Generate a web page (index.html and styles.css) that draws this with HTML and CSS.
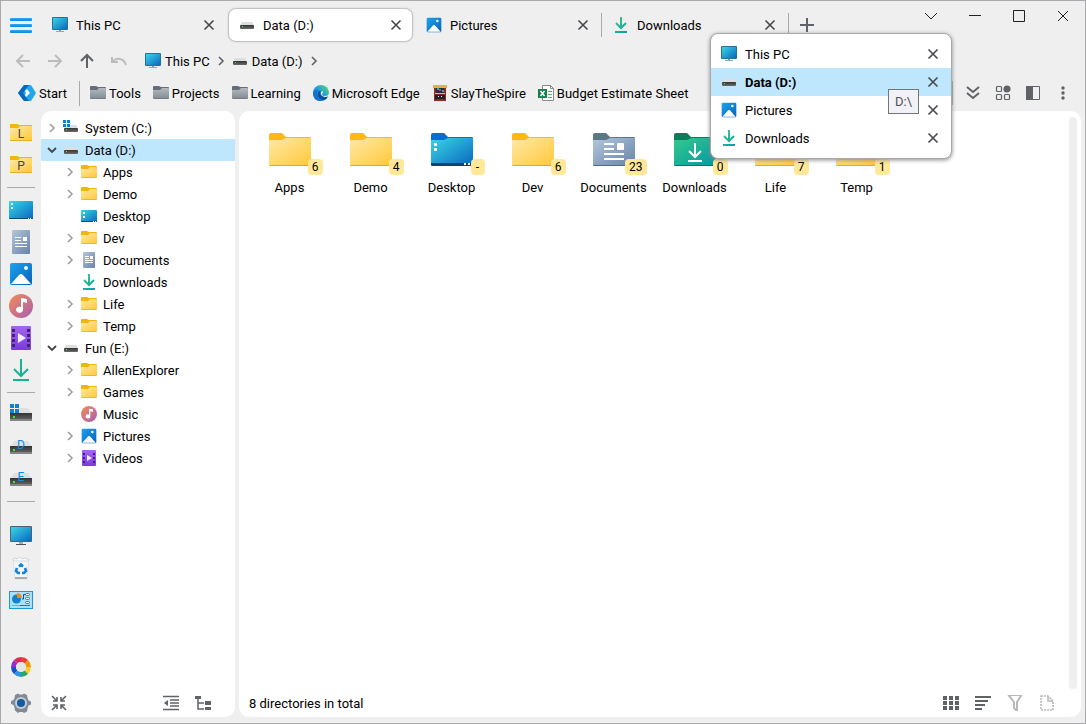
FILE: index.html
```html
<!DOCTYPE html>
<html lang="en">

<head>
    <meta charset="UTF-8">
    <meta name="viewport" content="width=device-width, initial-scale=1">
    <link rel="stylesheet" href="styles.css">
    <title>Data (D:)</title>
</head>

<body>
    <!-- icon sprite -->
    <svg class="sprite" aria-hidden="true">
        <defs>
            <linearGradient id="g-yellow" x1="0" y1="0" x2="1" y2="1"><stop offset="0" stop-color="#ffe9a6"/><stop offset="1" stop-color="#ffc83a"/></linearGradient>
            <linearGradient id="g-gray" x1="0" y1="0" x2="0" y2="1"><stop offset="0" stop-color="#b3bac1"/><stop offset="1" stop-color="#858e97"/></linearGradient>
            <linearGradient id="g-screen" x1="0" y1="0" x2="1" y2="1"><stop offset="0" stop-color="#3ad6e4"/><stop offset="1" stop-color="#0a68c0"/></linearGradient>
            <linearGradient id="g-blue" x1="0" y1="0" x2="1" y2="1"><stop offset="0" stop-color="#1ba4ee"/><stop offset="1" stop-color="#0861b8"/></linearGradient>
            <linearGradient id="g-doc" x1="0" y1="0" x2="1" y2="1"><stop offset="0" stop-color="#b4c6dc"/><stop offset="1" stop-color="#6683a8"/></linearGradient>
            <linearGradient id="g-green" x1="0" y1="0" x2="1" y2="1"><stop offset="0" stop-color="#35c98a"/><stop offset="1" stop-color="#0498a5"/></linearGradient>
            <linearGradient id="g-down" gradientUnits="userSpaceOnUse" x1="2" y1="1" x2="14" y2="15"><stop offset="0" stop-color="#3dcb85"/><stop offset="1" stop-color="#08a0a8"/></linearGradient>
            <linearGradient id="g-music" x1="0" y1="0" x2="1" y2="1"><stop offset="0" stop-color="#f38c57"/><stop offset="1" stop-color="#a65fb0"/></linearGradient>
            <linearGradient id="g-video" x1="0" y1="0" x2="0" y2="1"><stop offset="0" stop-color="#a466ef"/><stop offset="1" stop-color="#7a3bdc"/></linearGradient>
            <linearGradient id="g-drive" x1="0" y1="0" x2="0" y2="1"><stop offset="0" stop-color="#333"/><stop offset="1" stop-color="#6c6c6c"/></linearGradient>
            <linearGradient id="g-menu" x1="0" y1="0" x2="0" y2="1"><stop offset="0" stop-color="#2aa9f4"/><stop offset="1" stop-color="#1485dc"/></linearGradient>
            <linearGradient id="g-edge" x1="0" y1="1" x2="1" y2="0"><stop offset="0" stop-color="#0c59a4"/><stop offset=".5" stop-color="#1c9de0"/><stop offset="1" stop-color="#5fdc62"/></linearGradient>
        </defs>
        <symbol id="pc" viewBox="0 0 16 16">
            <path d="M7 13h2v1H7z" fill="#8b98a5"/><path d="M4 14h8v1H4z" fill="#9aa5b0"/>
            <rect width="16" height="13" rx="1" fill="#23729b"/><rect x="1" y="1" width="14" height="11" fill="url(#g-screen)"/>
        </symbol>
        <symbol id="drive" viewBox="0 0 16 16">
            <path d="M3 5h10l2 3H1z" fill="#dedede"/><rect x="1" y="8" width="14" height="4" rx="1" fill="url(#g-drive)"/><rect x="3" y="9" width="1" height="1" fill="#3f3"/>
        </symbol>
        <symbol id="drive-c" viewBox="0 0 16 16">
            <path d="M5 5h8l2 3H1z" fill="#dedede"/><rect x="1" y="8" width="14" height="4" rx="1" fill="url(#g-drive)"/><rect x="3" y="9" width="1" height="1" fill="#3f3"/>
            <path d="M0 0h3v3H0zM4 0h3v3H4zM0 4h3v3H0zM4 4h3v3H4z" fill="#0b84d8"/>
        </symbol>
        <symbol id="folder" viewBox="0 0 16 16">
            <path d="M0 2a1 1 0 0 1 1-1h5l2 1h7a1 1 0 0 1 1 1v4H0z" fill="#f4b30d"/><path d="M0 5h7l2-2h6a1 1 0 0 1 1 1v9H0z" fill="url(#g-yellow)"/><path d="M0 13h16a1 1 0 0 1-1 1H1a1 1 0 0 1-1-1z" fill="#edb62c"/>
        </symbol>
        <symbol id="folder-gray" viewBox="0 0 16 16">
            <path d="M0 2a1 1 0 0 1 1-1h5l2 1h7a1 1 0 0 1 1 1v4H0z" fill="#666d74"/><path d="M0 5h7l2-2h6a1 1 0 0 1 1 1v9H0z" fill="url(#g-gray)"/><path d="M0 13h16a1 1 0 0 1-1 1H1a1 1 0 0 1-1-1z" fill="#757d85"/>
        </symbol>
        <symbol id="desktop" viewBox="0 0 24 24">
            <rect y="3" width="24" height="18" rx="1" fill="url(#g-screen)"/><path d="M0 20h24a1 1 0 0 1-1 1H1a1 1 0 0 1-1-1z" fill="#0a4f83"/>
            <path d="M2 5h2v2H2zM2 9h2v2H2zM19 20h1v1h-1zM21 20h1v1h-1z" fill="#fff"/>
        </symbol>
        <symbol id="desktop-sm" viewBox="0 0 16 16">
            <rect y="2" width="16" height="12" rx="1" fill="url(#g-screen)"/><path d="M0 13h16a1 1 0 0 1-1 1H1a1 1 0 0 1-1-1z" fill="#0a4f83"/>
            <path d="M2 4h2v2H2zM2 8h2v2H2zM12 13h1v1h-1zM14 13h1v1h-1z" fill="#fff"/>
        </symbol>
        <symbol id="document" viewBox="0 0 24 24">
            <rect x="3" width="18" height="24" rx="1" fill="url(#g-doc)"/>
            <path d="M6 7h6v1H6zM6 10h6v1H6zM6 13h12v1H6zM6 16h12v1H6zM14 7h4v4h-4z" fill="#fff"/>
        </symbol>
        <symbol id="document-sm" viewBox="0 0 16 16">
            <rect x="2" width="12" height="16" rx="1" fill="url(#g-doc)"/>
            <path d="M4 4h4v1H4zM4 6h4v1H4zM4 8h8v1H4zM4 10h8v1H4zM9 4h3v3H9z" fill="#fff"/>
        </symbol>
        <symbol id="picture" viewBox="0 0 24 24">
            <rect x="1" y="1" width="22" height="22" rx="2" fill="url(#g-blue)"/><path d="M2 22l8-9q2-2 4 0l8 9z" fill="#fff"/><circle cx="17" cy="6" r="2" fill="#e2f6ff"/>
        </symbol>
        <symbol id="music" viewBox="0 0 24 24">
            <circle cx="12" cy="12" r="12" fill="url(#g-music)"/><path d="M12 4l6 1v4l-4-1v8a3.500 3 0 1 1-2-3z" fill="#fff"/>
        </symbol>
        <symbol id="video" viewBox="0 0 24 24">
            <rect x="2" width="20" height="24" rx="1" fill="url(#g-video)"/>
            <path d="M3 3h3v3H3zM3 8h3v3H3zM3 13h3v3H3zM3 18h3v3H3zM18 3h3v3h-3zM18 8h3v3h-3zM18 13h3v3h-3zM18 18h3v3h-3z" fill="#42217c"/><path d="M9 7l8 5-8 5z" fill="#f3edff"/>
        </symbol>
        <symbol id="video-sm" viewBox="0 0 16 16">
            <rect x="1" width="14" height="16" rx="1" fill="url(#g-video)"/>
            <path d="M2 3h2v2H2zM2 7h2v2H2zM2 11h2v2H2zM12 3h2v2h-2zM12 7h2v2h-2zM12 11h2v2h-2z" fill="#42217c"/><path d="M6 5l5 3-5 3z" fill="#f3edff"/>
        </symbol>
        <symbol id="download" viewBox="0 0 16 16">
            <path d="M8 0v11M3 6l5 5 5-5M2 15h12" fill="none" stroke="url(#g-down)" stroke-width="2"/>
        </symbol>
        <symbol id="download-lg" viewBox="0 0 24 24">
            <path d="M12 1v17M5 11l7 7 7-7M4 22h16" fill="none" stroke="#18b391" stroke-width="2"/>
        </symbol>
        <symbol id="side-folder" viewBox="0 0 24 24">
            <path d="M1 4a1 1 0 0 1 1-1h6l2 1h13v5H1z" fill="#f4b30d"/><path d="M1 7h8l2-2h12v15H1z" fill="url(#g-yellow)"/><path d="M1 19h22v1H1z" fill="#e8b02b"/>
        </symbol>
        <symbol id="side-drive" viewBox="0 0 24 24">
            <path d="M5 6h14l4 6H1z" fill="#dfdfe1"/><path d="M1 11h22v8H1z" fill="url(#g-drive)"/><path d="M1 17h22v2H1z" fill="#858585"/><path d="M4 14h2v2H4z" fill="#2df02d"/>
        </symbol>
        <symbol id="side-pc" viewBox="0 0 24 24">
            <path d="M10 18h4v2h-4z" fill="#a4adb3"/><path d="M7 20h10v1H7z" fill="#4a5359"/><rect x="1" y="2" width="22" height="16" rx="1" fill="#4c626f"/><rect x="2" y="3" width="20" height="14" fill="url(#g-screen)"/>
        </symbol>
        <symbol id="bin" viewBox="0 0 24 24">
            <path d="M4 3h16l-2 20H6z" fill="#f3f5f7" stroke="#d3d7db" stroke-width=".6"/><path d="M4 4l1-2 3 1 3-2 2 2 3-1 4 2-1 1H5z" fill="#fafafa" stroke="#c0c4c8" stroke-width=".6"/><path d="M6 21h12v2H6z" fill="#a9adb1"/>
            <path d="M10 10.500l2-2 2 2M16 12l1 3-2 2h-2M11 17H9l-2-2 1-3" fill="none" stroke="#1683d8" stroke-width="2.600"/>
        </symbol>
        <symbol id="panel-chart" viewBox="0 0 24 24">
            <rect x=".5" y="3.500" width="23" height="17" fill="#a7e1fa" stroke="#1c96dc"/><circle cx="7.500" cy="11" r="4.500" fill="#1680d0"/><path d="M8 10V5a5 5 0 0 1 5 5z" fill="#f58a13"/>
            <path d="M13 11h1.500V6.500H17" fill="none" stroke="#174f85"/><g fill="#fff" stroke="#1763a8" stroke-width=".8"><rect x="16.500" y="5.500" width="4" height="2" rx="1"/><rect x="16.500" y="9.500" width="4" height="2" rx="1"/><rect x="16.500" y="13.500" width="4" height="2" rx="1"/></g>
            <path d="M3 17h8v1H3z" fill="#ef941d"/><path d="M11 17h10v1H11z" fill="#1673c6"/>
        </symbol>
        <symbol id="wheel" viewBox="0 0 24 24">
            <g fill="none" stroke-width="5">
                <path d="M12 4.500A7.500 7.500 0 0 1 17.300 6.700" stroke="#ed3b3b"/><path d="M17.300 6.700A7.500 7.500 0 0 1 19.500 12" stroke="#f5950c"/><path d="M19.500 12A7.500 7.500 0 0 1 17.300 17.300" stroke="#fccc28"/><path d="M17.300 17.300A7.500 7.500 0 0 1 12 19.500" stroke="#28a761"/>
                <path d="M12 19.500A7.500 7.500 0 0 1 6.700 17.300" stroke="#2794e5"/><path d="M6.700 17.300A7.500 7.500 0 0 1 4.500 12" stroke="#1255c0"/><path d="M4.500 12A7.500 7.500 0 0 1 6.700 6.700" stroke="#9b2bcb"/><path d="M6.700 6.700A7.500 7.500 0 0 1 12 4.500" stroke="#d92b58"/>
            </g>
            <circle cx="12" cy="12" r="5" fill="#e5e5e5"/>
        </symbol>
        <symbol id="gear" viewBox="0 0 24 24">
            <path d="M9 2.500l1.500 1h3l1.500-1 3 1.500.5 3 1 2.500 2.500 1v3l-2.500 1-1 3-.5 3-3 1.500-1.500-1h-3l-1.500 1L6 19.500l-.5-3-1-2.500L2 13v-3l2.500-1 1-2L6 4z" fill="#808b95"/><circle cx="12" cy="12" r="6" fill="#c5ccd2"/><circle cx="12" cy="12" r="4" fill="#155b9d"/>
        </symbol>
        <symbol id="close" viewBox="0 0 16 16"><path d="M3.500 3.500l9 9M12.500 3.500l-9 9" fill="none" stroke="currentColor" stroke-width="1.600"/></symbol>
        <symbol id="chevron" viewBox="0 0 16 16"><path d="M6 4l4 4-4 4" fill="none" stroke="currentColor" stroke-width="1.600"/></symbol>
        <symbol id="chevron-down" viewBox="0 0 16 16"><path d="M4 6l4 4 4-4" fill="none" stroke="currentColor" stroke-width="1.800"/></symbol>
        <symbol id="big-folder" viewBox="0 0 42 34">
            <path d="M0 2a2 2 0 0 1 2-2h11l4 4h24a1 1 0 0 1 1 1v8H0z" fill="#fcb913"/><path d="M0 7h13l4-2h25v27a1 1 0 0 1-1 1H1a1 1 0 0 1-1-1z" fill="url(#g-yellow)"/><path d="M0 32h42l-1 1H1z" fill="#e5a520"/>
        </symbol>
    </svg>

    <div class="window">
        <header class="titlebar">
            <button class="menu-btn" aria-label="Menu">
                <svg width="22" height="16" viewBox="0 0 22 16" fill="url(#g-menu)"><rect width="22" height="3" rx="1"/><rect y="6" width="22" height="3" rx="1"/><rect y="12" width="22" height="3" rx="1"/></svg>
            </button>
            <div class="tabs">
                <div class="tab"><svg class="icon"><use href="#pc"/></svg><a href="#">This PC</a><button class="close" aria-label="Close This PC"><svg class="icon"><use href="#close"/></svg></button></div>
                <div class="tab active"><svg class="icon"><use href="#drive"/></svg><a href="#">Data (D:)</a><button class="close" aria-label="Close Data"><svg class="icon"><use href="#close"/></svg></button></div>
                <div class="tab"><svg class="icon"><use href="#picture"/></svg><a href="#">Pictures</a><button class="close" aria-label="Close Pictures"><svg class="icon"><use href="#close"/></svg></button></div>
                <div class="tab divided"><svg class="icon"><use href="#download"/></svg><a href="#">Downloads</a><button class="close" aria-label="Close Downloads"><svg class="icon"><use href="#close"/></svg></button></div>
                <button class="new-tab" aria-label="New tab"><svg class="icon" viewBox="0 0 16 16"><path d="M8 1v14M1 8h14" stroke="#5f6266" stroke-width="2"/></svg></button>
            </div>
            <div class="win-controls">
                <div class="tab-list">
                    <button aria-label="Tab list"><svg class="icon" viewBox="0 0 16 16"><path d="M2 5l6 6 6-6"/></svg></button>
                    <ul class="popup">
                        <li><svg class="icon"><use href="#pc"/></svg><a href="#">This PC</a><button class="close" aria-label="Close This PC"><svg class="icon"><use href="#close"/></svg></button></li>
                        <li class="current"><svg class="icon"><use href="#drive"/></svg><a href="#">Data (D:)</a><button class="close" aria-label="Close Data"><svg class="icon"><use href="#close"/></svg></button><span class="tooltip" role="tooltip">D:\</span></li>
                        <li><svg class="icon"><use href="#picture"/></svg><a href="#">Pictures</a><button class="close" aria-label="Close Pictures"><svg class="icon"><use href="#close"/></svg></button></li>
                        <li><svg class="icon"><use href="#download"/></svg><a href="#">Downloads</a><button class="close" aria-label="Close Downloads"><svg class="icon"><use href="#close"/></svg></button></li>
                    </ul>
                </div>
                <button aria-label="Minimize"><svg class="icon" viewBox="0 0 16 16"><path d="M2 7.500h12"/></svg></button>
                <button aria-label="Maximize"><svg class="icon" viewBox="0 0 16 16"><path d="M2.500 2.500h11v11h-11z"/></svg></button>
                <button aria-label="Close"><svg class="icon" viewBox="0 0 16 16"><path d="M3 3l10 10M13 3L3 13"/></svg></button>
            </div>
        </header>

        <nav class="navbar">
            <button class="nav-btn" aria-label="Back" disabled><svg class="icon" viewBox="0 0 16 16"><path d="M15 8H2M8 2L2 8l6 6"/></svg></button>
            <button class="nav-btn" aria-label="Forward" disabled><svg class="icon" viewBox="0 0 16 16"><path d="M1 8h13M8 2l6 6-6 6"/></svg></button>
            <button class="nav-btn" aria-label="Up"><svg class="icon" viewBox="0 0 16 16"><path d="M8 15V2M2 8l6-6 6 6"/></svg></button>
            <button class="nav-btn" aria-label="Undo" disabled><svg class="icon" viewBox="0 0 16 16"><path d="M1 4v5h6M1.500 8.500c4-4 11-4 13.500 3.500"/></svg></button>
            <div class="crumbs">
                <a href="#"><svg class="icon"><use href="#pc"/></svg>This PC</a>
                <svg class="icon sep"><use href="#chevron"/></svg>
                <a href="#"><svg class="icon"><use href="#drive"/></svg>Data (D:)</a>
                <svg class="icon sep"><use href="#chevron"/></svg>
            </div>
        </nav>

        <div class="bookmarks">
            <a class="start" href="#"><svg width="18" height="18" viewBox="0 0 18 18"><path d="M6 1h7l5 8-5 8H6L0 9z" fill="#22a7ec"/><path d="M6 1h5L7 6 5 9l2 3 4 5H6L0 9z" fill="#0d65bd"/><path d="M9 5l3 4-4 4-1-2 1-2-1-2z" fill="#fff"/></svg>Start</a>
            <div class="links">
                <a href="#"><svg class="icon"><use href="#folder-gray"/></svg>Tools</a>
                <a href="#"><svg class="icon"><use href="#folder-gray"/></svg>Projects</a>
                <a href="#"><svg class="icon"><use href="#folder-gray"/></svg>Learning</a>
                <a href="#"><svg class="icon" viewBox="0 0 16 16"><circle cx="8" cy="8" r="8" fill="url(#g-edge)"/><path d="M0 8q2-4 6-3-2 1-2 4 1 5 6 7Q0 17 0 8z" fill="#1672cf"/><path d="M6 6q-2 2-1 5 2 4 6 4 3-1 4-4-3 2-6 0Q6 9 8 6z" fill="#0c4f9e"/><path d="M9 6q2 1 0 3 0 2 3 2 3 0 4-2v2q-2 1-4 1Q7 11 8 7z" fill="#efefef"/></svg>Microsoft Edge</a>
                <a href="#"><svg class="icon" viewBox="0 0 16 16"><path d="M2 0h12v16H2z" fill="#8d2829"/><path d="M1 0h14v3H1z" fill="#f2ad38"/><path d="M4 3h8v5H4z" fill="#243142"/><path d="M5 3h2v2H5zM10 5h2v2h-2z" fill="#31a5a0"/><path d="M7 4h2v2H7z" fill="#dc3974"/><path d="M3 8h10v1H3z" fill="#ecb549"/><path d="M3 10h10v4H3z" fill="#241f25"/><path d="M6 11h1v1H6zM9 11h1v1H9z" fill="#eee"/></svg>SlayTheSpire</a>
                <a href="#"><svg class="icon" viewBox="0 0 16 16"><path d="M4.500.5h8l3 3v12h-11z" fill="#fff" stroke="#888"/><path d="M12.500.5v3h3" fill="none" stroke="#888"/><path d="M10 6.500h4M10 9.500h4M10 12.500h4" stroke="#5fa583"/><path d="M0 4h9v9H0z" fill="#14824a"/><path d="M2.500 6l4 5M6.500 6l-4 5" stroke="#fff" stroke-width="1.500"/></svg>Budget Estimate Sheet</a>
            </div>
            <div class="tools">
                <button aria-label="More bookmarks"><svg class="icon" viewBox="0 0 16 16"><path d="M2 2l6 5 6-5M2 8l6 5 6-5" fill="none" stroke="#5f6266" stroke-width="2"/></svg></button>
                <button aria-label="Apps"><svg class="icon" viewBox="0 0 16 16" fill="none" stroke="#5f6266" stroke-width="1.200"><rect x="1.500" y="1.500" width="5" height="5" rx="1"/><circle cx="12" cy="4" r="3" fill="#5f6266"/><rect x="1.500" y="9.500" width="5" height="5" rx="1"/><rect x="9.500" y="9.500" width="5" height="5" rx="1"/></svg></button>
                <button aria-label="Side panel"><svg class="icon" viewBox="0 0 16 16"><path d="M1.500 1.500h13v13h-13z" fill="none" stroke="#5f6266"/><path d="M1 1h7v14H1z" fill="#5f6266"/></svg></button>
                <button aria-label="More"><svg class="icon" viewBox="0 0 16 16" fill="#5f6266"><circle cx="8" cy="3" r="1.700"/><circle cx="8" cy="8" r="1.700"/><circle cx="8" cy="13" r="1.700"/></svg></button>
            </div>
        </div>

        <main class="body">
            <aside class="rail">
                <button aria-label="Life"><svg><use href="#side-folder"/></svg><span class="letter dark">L</span></button>
                <button aria-label="Projects"><svg><use href="#side-folder"/></svg><span class="letter dark">P</span></button>
                <hr>
                <button aria-label="Desktop"><svg><use href="#desktop"/></svg></button>
                <button aria-label="Documents"><svg><use href="#document"/></svg></button>
                <button aria-label="Pictures"><svg><use href="#picture"/></svg></button>
                <button aria-label="Music"><svg><use href="#music"/></svg></button>
                <button aria-label="Videos"><svg><use href="#video"/></svg></button>
                <button aria-label="Downloads"><svg><use href="#download-lg"/></svg></button>
                <hr>
                <button aria-label="System drive"><svg viewBox="0 0 24 24"><path d="M9 5h10l4 6H1z" fill="#dfdfe1"/><path d="M1 10h22v8H1z" fill="url(#g-drive)"/><path d="M1 16h22v2H1z" fill="#858585"/><path d="M4 13h2v2H4z" fill="#2df02d"/><path d="M1 1h4v4H1zM6 1h4v4H6zM1 6h4v4H1zM6 6h4v4H6z" fill="#0b84d8"/></svg></button>
                <button aria-label="Data drive"><svg><use href="#side-drive"/></svg><span class="letter">D</span></button>
                <button aria-label="Fun drive"><svg><use href="#side-drive"/></svg><span class="letter">E</span></button>
                <hr>
                <div class="rail-group">
                    <button aria-label="This PC"><svg><use href="#side-pc"/></svg></button>
                    <button aria-label="Recycle Bin"><svg><use href="#bin"/></svg></button>
                    <button aria-label="Control Panel"><svg><use href="#panel-chart"/></svg></button>
                </div>
                <div class="rail-bottom">
                    <button aria-label="Theme"><svg><use href="#wheel"/></svg></button>
                    <button aria-label="Settings"><svg><use href="#gear"/></svg></button>
                </div>
            </aside>

            <section class="panel tree-panel">
                <ul class="tree">
                    <li><svg class="icon arrow"><use href="#chevron"/></svg><svg class="icon"><use href="#drive-c"/></svg><a href="#">System (C:)</a></li>
                    <li class="selected"><svg class="icon arrow open"><use href="#chevron-down"/></svg><svg class="icon"><use href="#drive"/></svg><a href="#">Data (D:)</a></li>
                    <li class="child"><svg class="icon arrow"><use href="#chevron"/></svg><svg class="icon"><use href="#folder"/></svg><a href="#">Apps</a></li>
                    <li class="child"><svg class="icon arrow"><use href="#chevron"/></svg><svg class="icon"><use href="#folder"/></svg><a href="#">Demo</a></li>
                    <li class="child"><svg class="icon arrow"></svg><svg class="icon"><use href="#desktop-sm"/></svg><a href="#">Desktop</a></li>
                    <li class="child"><svg class="icon arrow"><use href="#chevron"/></svg><svg class="icon"><use href="#folder"/></svg><a href="#">Dev</a></li>
                    <li class="child"><svg class="icon arrow"><use href="#chevron"/></svg><svg class="icon"><use href="#document-sm"/></svg><a href="#">Documents</a></li>
                    <li class="child"><svg class="icon arrow"></svg><svg class="icon"><use href="#download"/></svg><a href="#">Downloads</a></li>
                    <li class="child"><svg class="icon arrow"><use href="#chevron"/></svg><svg class="icon"><use href="#folder"/></svg><a href="#">Life</a></li>
                    <li class="child"><svg class="icon arrow"><use href="#chevron"/></svg><svg class="icon"><use href="#folder"/></svg><a href="#">Temp</a></li>
                    <li><svg class="icon arrow open"><use href="#chevron-down"/></svg><svg class="icon"><use href="#drive"/></svg><a href="#">Fun (E:)</a></li>
                    <li class="child"><svg class="icon arrow"><use href="#chevron"/></svg><svg class="icon"><use href="#folder"/></svg><a href="#">AllenExplorer</a></li>
                    <li class="child"><svg class="icon arrow"><use href="#chevron"/></svg><svg class="icon"><use href="#folder"/></svg><a href="#">Games</a></li>
                    <li class="child"><svg class="icon arrow"></svg><svg class="icon"><use href="#music"/></svg><a href="#">Music</a></li>
                    <li class="child"><svg class="icon arrow"><use href="#chevron"/></svg><svg class="icon"><use href="#picture"/></svg><a href="#">Pictures</a></li>
                    <li class="child"><svg class="icon arrow"><use href="#chevron"/></svg><svg class="icon"><use href="#video-sm"/></svg><a href="#">Videos</a></li>
                </ul>
                <div class="panel-footer">
                    <button class="push" aria-label="Collapse"><svg class="icon" viewBox="0 0 16 16"><path d="M1 1l5 5M6 2v4H2M15 1l-5 5M10 2v4h4M1 15l5-5M6 14v-4H2M15 15l-5-5M10 14v-4h4" fill="none" stroke="#5f6266" stroke-width="1.600"/></svg></button>
                    <button aria-label="Outdent"><svg class="icon" viewBox="0 0 16 16"><path d="M0 1.500h16M7 5h9M7 8h9M7 11h9M0 14.500h16" stroke="#5f6266" stroke-width="1.600"/><path d="M5 5v6L1 8z" fill="#5f6266"/></svg></button>
                    <button aria-label="Tree"><svg class="icon" viewBox="0 0 16 16"><path d="M0 1h6v3H0zM10 6h6v4h-6zM10 12h6v3h-6z" fill="#5f6266"/><path d="M3 4v10h6M3 8h6" fill="none" stroke="#5f6266" stroke-width="1.500"/></svg></button>
                </div>
            </section>

            <section class="panel files-panel">
                <div class="files">
                    <a class="file" href="#"><span class="thumb"><svg><use href="#big-folder"/></svg><span class="badge">6</span></span>Apps</a>
                    <a class="file" href="#"><span class="thumb"><svg><use href="#big-folder"/></svg><span class="badge">4</span></span>Demo</a>
                    <a class="file" href="#"><span class="thumb"><svg viewBox="0 0 42 34"><path d="M0 2a2 2 0 0 1 2-2h11l4 4h24a1 1 0 0 1 1 1v8H0z" fill="#0770cf"/><path d="M0 7h13l4-2h25v27H0z" fill="url(#g-screen)"/><path d="M0 30h42v2a1 1 0 0 1-1 1H1a1 1 0 0 1-1-1z" fill="#09466f"/><path d="M3 10h3v3H3zM3 15h3v3H3zM33 30h2v2h-2zM37 30h2v2h-2z" fill="#fff"/></svg><span class="badge">-</span></span>Desktop</a>
                    <a class="file" href="#"><span class="thumb"><svg><use href="#big-folder"/></svg><span class="badge">6</span></span>Dev</a>
                    <a class="file" href="#"><span class="thumb"><svg viewBox="0 0 42 34"><path d="M0 2a2 2 0 0 1 2-2h11l4 4h24a1 1 0 0 1 1 1v8H0z" fill="#5b7785"/><path d="M0 7h13l4-2h25v27a1 1 0 0 1-1 1H1a1 1 0 0 1-1-1z" fill="url(#g-doc)"/><path d="M0 32h42l-1 1H1z" fill="#536b86"/><path d="M11 10h10v2H11zM11 15h10v2H11zM11 20h20v2H11zM11 25h20v2H11z" fill="#fff"/><rect x="24" y="10" width="7" height="7" rx="1" fill="#fff"/></svg><span class="badge">23</span></span>Documents</a>
                    <a class="file" href="#"><span class="thumb"><svg viewBox="0 0 42 34"><path d="M0 2a2 2 0 0 1 2-2h11l4 4h24a1 1 0 0 1 1 1v8H0z" fill="#0a7d5b"/><path d="M0 7h13l4-2h25v27a1 1 0 0 1-1 1H1a1 1 0 0 1-1-1z" fill="url(#g-green)"/><path d="M0 32h42l-1 1H1z" fill="#08736f"/><path d="M21 10v14M15 18l6 6 6-6M14 28h14" fill="none" stroke="#fff" stroke-width="2"/></svg><span class="badge">0</span></span>Downloads</a>
                    <a class="file" href="#"><span class="thumb"><svg><use href="#big-folder"/></svg><span class="badge">7</span></span>Life</a>
                    <a class="file" href="#"><span class="thumb"><svg><use href="#big-folder"/></svg><span class="badge">1</span></span>Temp</a>
                </div>
                <div class="scrollbar"></div>
                <div class="panel-footer">
                    <span class="push">8 directories in total</span>
                    <button aria-label="Grid view"><svg class="icon" viewBox="0 0 16 16"><path d="M0 1h4v4H0zM6 1h4v4H6zM12 1h4v4h-4zM0 6h4v4H0zM6 6h4v4H6zM12 6h4v4h-4zM0 11h4v4H0zM6 11h4v4H6zM12 11h4v4h-4z" fill="#5f6266"/></svg></button>
                    <button aria-label="Sort"><svg class="icon" viewBox="0 0 16 16"><path d="M0 1h16v2H0zM0 5h13v2H0zM0 9h10v2H0zM0 13h7v2H0z" fill="#5f6266"/></svg></button>
                    <button aria-label="Filter"><svg class="icon" viewBox="0 0 16 16"><path d="M1.500 0h13L10 7v9l-3-3V7z" fill="none" stroke="#b9b9b9" stroke-width="2"/></svg></button>
                    <button aria-label="New file"><svg class="icon" viewBox="0 0 16 16"><path d="M2 1h7l5 5v9H2z" fill="none" stroke="#b9b9b9" stroke-width="1.600" stroke-dasharray="2 1"/><path d="M9 1v5h5" fill="none" stroke="#b9b9b9" stroke-width="1.500"/></svg></button>
                </div>
            </section>
        </main>
    </div>
</body>

</html>
```
FILE: styles.css
```css
* {
    box-sizing: border-box;
}

body {
    margin: 0;
    color: #000;
    font-family: Roboto, "Noto Sans", sans-serif;
    font-size: 13px;
    line-height: 21px;
}

button {
    display: flex;
    align-items: center;
    justify-content: center;
    padding: 0;
    color: inherit;
    font: inherit;
    background: none;
    border: 0;
}

a {
    color: inherit;
    text-decoration: none;
    white-space: nowrap;
}

ul {
    margin: 0;
    padding: 0;
    list-style: none;
}

svg {
    display: block;
    flex: none;
}

.sprite {
    position: absolute;
    width: 0;
    height: 0;
}

.icon {
    width: 16px;
    height: 16px;
}

.window {
    display: flex;
    flex-direction: column;
    min-height: 100vh;
    padding-bottom: 6px;
    background-color: #efefef;
    border: 1px solid #a9a9ae;
}

/* title bar */
.titlebar {
    display: flex;
    height: 44px;
}

.menu-btn {
    width: 40px;
    padding-top: 6px;
}

.tabs {
    display: flex;
    flex: 1;
    gap: 2px;
    min-width: 0;
    padding: 7px 0 3px;
}

.tab {
    position: relative;
    display: flex;
    flex: 0 1 185px;
    align-items: center;
    gap: 8px;
    min-width: 0;
    padding: 0 8px 0 10px;
    border: 1px solid transparent;
    border-radius: 8px;
}

.tab a {
    flex: 1;
    overflow: hidden;
}

.tab.active {
    background-color: #fff;
    border-color: #c3c3c3;
    box-shadow: 0 0 2px #ccc;
}

.divided::before,
.divided::after {
    content: "";
    position: absolute;
    top: 4px;
    bottom: 4px;
    left: -2px;
    width: 1px;
    background-color: #aaa;
}

.divided::after {
    right: -3px;
    left: auto;
}

.close {
    color: #45484c;
}

.new-tab {
    width: 36px;
}

.win-controls {
    display: flex;
    height: 30px;
}

.win-controls > button,
.tab-list > button {
    width: 44px;
    height: 30px;
}

.win-controls > button .icon,
.tab-list > button .icon {
    fill: none;
    stroke: #222;
}

.tab-list {
    position: relative;
}

.popup {
    position: absolute;
    z-index: 2;
    top: 32px;
    right: 1px;
    width: 242px;
    padding: 6px 0;
    background-color: #fff;
    border: 1px solid #a8a8a8;
    border-radius: 8px;
    box-shadow: 0 1px 4px #888;
}

.popup li {
    position: relative;
    display: flex;
    align-items: center;
    gap: 8px;
    height: 28px;
    padding: 0 10px;
}

.popup a {
    flex: 1;
}

.popup .current {
    background-color: #bee6fd;
}

.popup .current a {
    font-weight: bold;
}

.tooltip {
    position: absolute;
    z-index: 3;
    top: 21px;
    right: 32px;
    padding: 1px 6px;
    color: #555;
    background-color: #f1f2f7;
    border: 1px solid #76767a;
}

/* navigation */
.navbar {
    display: flex;
    align-items: center;
    height: 32px;
    padding-left: 6px;
}

.nav-btn {
    width: 32px;
    height: 32px;
    color: #5f6266;
}

.nav-btn:disabled {
    color: #bcbcbc;
}

.nav-btn .icon {
    fill: none;
    stroke: currentColor;
    stroke-width: 2;
}

.crumbs {
    display: flex;
    align-items: center;
    gap: 3px;
    padding-left: 10px;
}

.crumbs a,
.bookmarks a {
    display: flex;
    align-items: center;
    gap: 4px;
}

.sep {
    color: #5f6266;
}

.bookmarks {
    display: flex;
    align-items: center;
    height: 34px;
    padding: 0 7px 2px 17px;
}

.bookmarks a {
    gap: 3px;
}

.links {
    display: flex;
    flex: 1;
    gap: 12px;
    margin-left: 12px;
    padding: 2px 10px;
    border-left: 1px solid #aaa;
}

.tools {
    display: flex;
    padding-left: 5px;
    border-left: 1px solid #aaa;
}

.tools button {
    width: 30px;
    height: 24px;
}

/* main area */
.body {
    display: flex;
    flex: 1;
    padding-right: 4px;
}

.rail {
    display: flex;
    flex: none;
    flex-direction: column;
    width: 40px;
    padding-top: 6px;
}

.rail button {
    position: relative;
    width: 40px;
    height: 32px;
}

.rail svg {
    width: 24px;
    height: 24px;
}

.rail hr {
    width: 28px;
    height: 1px;
    margin: 6px;
    background-color: #aaa;
    border: 0;
}

.letter {
    position: absolute;
    inset: 4px 0 0;
    color: #0d8ddb;
    font-size: 12px;
}

.letter.dark {
    inset: 7px 0 0;
    color: #444;
}

.rail-group {
    margin-top: 12px;
}

.rail-bottom {
    display: flex;
    flex-direction: column;
    gap: 4px;
    margin-top: auto;
    margin-bottom: -2px;
}

.panel {
    position: relative;
    display: flex;
    flex-direction: column;
    background-color: #fff;
    border-radius: 10px;
}

.tree-panel {
    flex: none;
    width: 194px;
    margin-right: 4px;
}

.tree {
    flex: 1;
    padding-top: 6px;
}

.tree li {
    display: flex;
    align-items: center;
    height: 22px;
    padding-left: 3px;
}

.tree a {
    padding-left: 6px;
}

.tree .child {
    padding-left: 21px;
}

.tree .selected {
    background-color: #bee6fd;
}

.arrow {
    margin-right: 3px;
    color: #a0a0a0;
}

.arrow.open {
    color: #444;
}

.panel-footer {
    display: flex;
    align-items: center;
    height: 28px;
    padding: 0 18px 0 10px;
}

.panel-footer button {
    width: 32px;
    height: 28px;
}

.panel-footer .push {
    margin-right: auto;
}

.tree-panel .panel-footer {
    padding: 0 16px 0 2px;
}

.files-panel {
    flex: 1;
    min-width: 0;
}

.files {
    display: flex;
    flex: 1;
    flex-wrap: wrap;
    align-content: flex-start;
    padding: 22px 18px 0 10px;
}

.file {
    display: flex;
    flex-direction: column;
    align-items: center;
    gap: 10px;
    width: 81px;
}

.thumb {
    position: relative;
}

.thumb svg {
    width: 42px;
    height: 34px;
}

.badge {
    position: absolute;
    top: 26px;
    right: -12px;
    min-width: 14px;
    padding: 0 4px;
    font-size: 12px;
    line-height: 16px;
    text-align: center;
    background-color: #ffe999;
    border-radius: 4px;
}

.scrollbar {
    position: absolute;
    top: 6px;
    right: 4px;
    bottom: 28px;
    width: 8px;
    background-color: #efefef;
    border-radius: 4px;
}
```
